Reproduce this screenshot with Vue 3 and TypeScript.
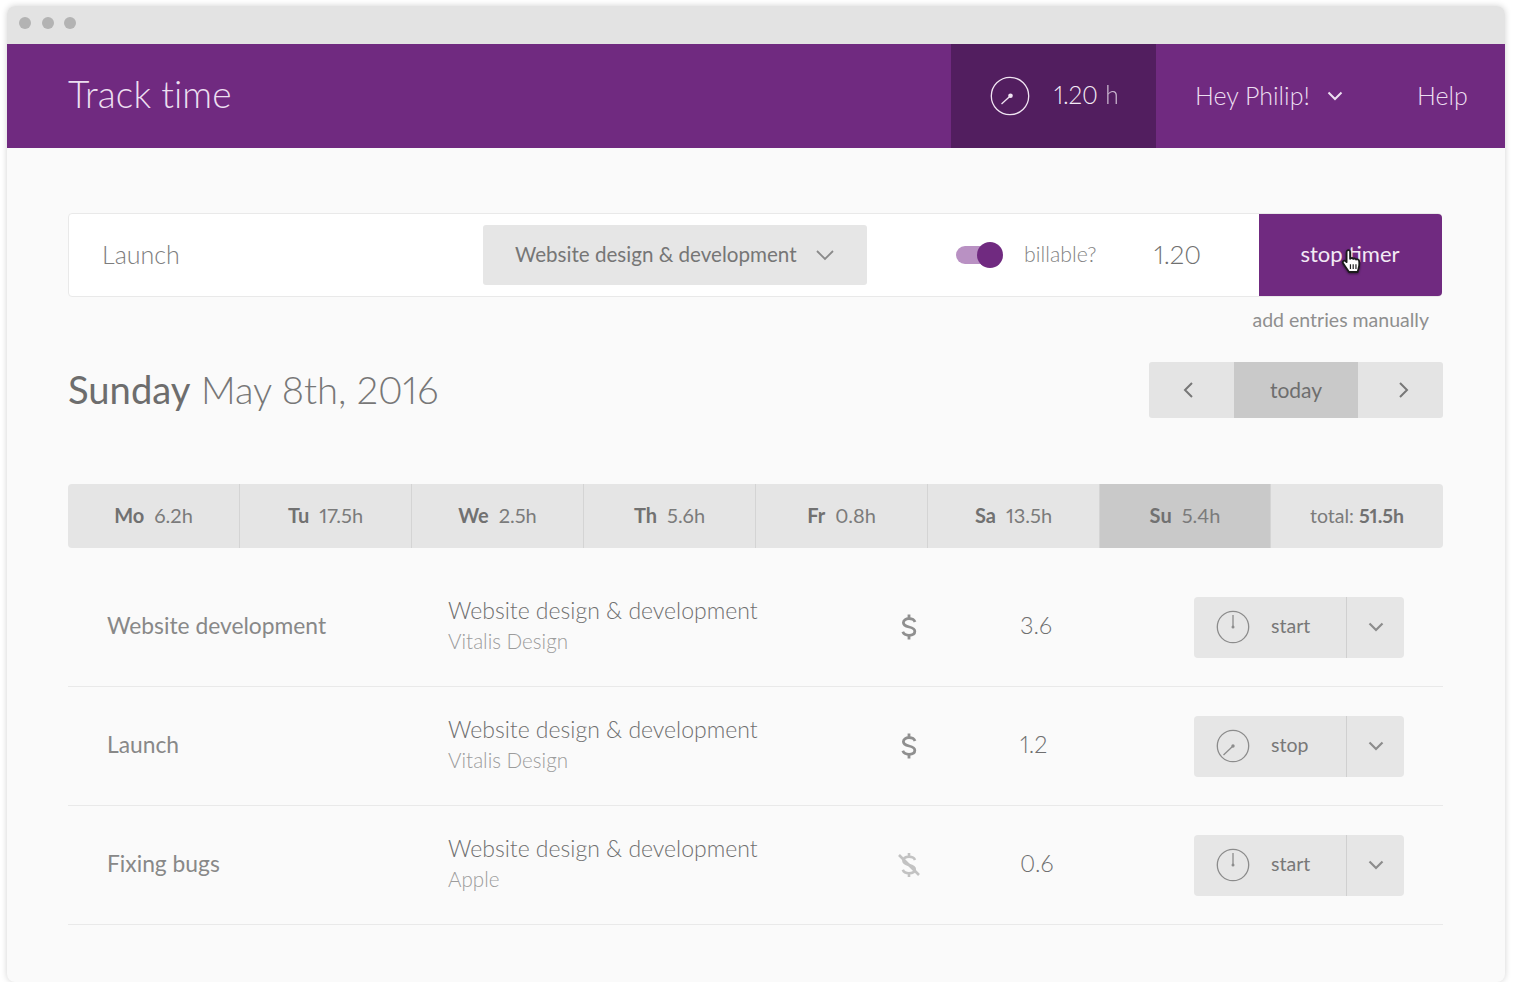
<script setup lang="ts">
const days = [
  { d: 'Mo', h: '6.2h' }, { d: 'Tu', h: '17.5h' }, { d: 'We', h: '2.5h' }, { d: 'Th', h: '5.6h' },
  { d: 'Fr', h: '0.8h' }, { d: 'Sa', h: '13.5h' }, { d: 'Su', h: '5.4h', active: true },
]
const rows = [
  { name: 'Website development', project: 'Website design & development', client: 'Vitalis Design', billable: true, hours: '3.6', action: 'start' },
  { name: 'Launch', project: 'Website design & development', client: 'Vitalis Design', billable: true, hours: '1.2', action: 'stop' },
  { name: 'Fixing bugs', project: 'Website design & development', client: 'Apple', billable: false, hours: '0.6', action: 'start' },
]
</script>

<template>
  <div class="window">
    <div class="chrome">
      <i class="dot"></i><i class="dot"></i><i class="dot"></i>
    </div>
    <header class="header">
      <h1 class="title">Track time</h1>
      <div class="timer">
        <svg class="gauge" width="40" height="40" viewBox="0 0 40 40" fill="none" stroke="#f0e4f2">
          <circle cx="20" cy="20" r="18.7" stroke-width="1.3" />
          <path d="M11.5 28 20 20.2" stroke-width="1.3" />
          <circle cx="20.500" cy="19.800" r="2.300" fill="#f0e4f2" stroke="none" />
        </svg>
        <span class="timer-val">1.20 <span class="timer-unit">h</span></span>
      </div>
      <div class="user">
        <span>Hey Philip!</span>
        <svg width="16" height="10" viewBox="0 0 16 10" fill="none" stroke="#ecdff0" stroke-width="2"><path d="M1.5 1.5 8 8l6.5-6.5" /></svg>
      </div>
      <div class="help">Help</div>
    </header>

    <main class="main">
      <div class="entry">
        <div class="entry-name">Launch</div>
        <div class="select">
          <span>Website design &amp; development</span>
          <svg width="20" height="12" viewBox="0 0 20 12" fill="none" stroke="#8a8a8a" stroke-width="1.8"><path d="M2 2l8 8 8-8" /></svg>
        </div>
        <div class="toggle"><i class="track"></i><i class="knob"></i></div>
        <span class="billable">billable?</span>
        <span class="entry-hours">1.20</span>
        <button class="stop-btn">
          stop timer
          <svg class="cursor" width="24" height="30" viewBox="0 0 20 25">
            <path d="M6 2.200c1-.9 2.400-.3 2.400 1V9l.4-.3c.9-.5 1.800-.3 2.300.4.8-.6 2-.4 2.400.5.9-.5 2.200 0 2.400 1.100.3 2.200.2 4.500-.5 6.500l-.7 2.800H7.500L3.800 14.500 2.500 12.600c-.8-1.300.7-2.700 2-1.700l1 .9V3.600c0-.6.100-1.100.500-1.400Z" fill="#fff" stroke="#1c1c1c" stroke-width="1.500" stroke-linejoin="round"/>
            <path d="M8.700 13.500v4M11 13.500v4M13.300 13.500v4" stroke="#222" stroke-width="1"/>
          </svg>
        </button>
      </div>
      <div class="manual">add entries manually</div>

      <div class="date-row">
        <h2 class="date"><span class="date-day">Sunday</span> May 8th, 2016</h2>
        <div class="pager">
          <button class="page-arrow prev">
            <svg width="12" height="18" viewBox="0 0 12 18" fill="none" stroke="#777" stroke-width="2"><path d="M10 2 3 9l7 7" /></svg>
          </button>
          <button class="page-today">today</button>
          <button class="page-arrow next">
            <svg width="12" height="18" viewBox="0 0 12 18" fill="none" stroke="#777" stroke-width="2"><path d="m2 2 7 7-7 7" /></svg>
          </button>
        </div>
      </div>

      <div class="week">
        <div v-for="day in days" :key="day.d" class="day" :class="{ active: day.active }">
          <b>{{ day.d }}</b><span>{{ day.h }}</span>
        </div>
        <div class="day total">total:&nbsp;<b>51.5h</b></div>
      </div>

      <div class="rows">
        <div v-for="row in rows" :key="row.name" class="row">
          <div class="row-name">{{ row.name }}</div>
          <div class="row-project">
            <div class="project">{{ row.project }}</div>
            <div class="client">{{ row.client }}</div>
          </div>
          <div class="row-bill">
            <svg v-if="row.billable" width="16" height="28" viewBox="0 0 16 28" fill="none" stroke="#8f8f8f" stroke-width="2.800">
              <path d="M14 9c-.8-2.300-3-3.300-6-3.300-3.400 0-5.600 1.600-5.600 4.100 0 5.800 11.400 2.600 11.400 8.500 0 2.600-2.400 4-5.800 4-3.200 0-5.300-1.200-6.200-3.500" />
              <path d="M8 1.500v4M8 22.500v4" />
            </svg>
            <svg v-else width="24" height="28" viewBox="0 0 24 28" fill="none" stroke="#c2c2c2" stroke-width="2.600">
              <path d="M18 9c-.8-2.300-3-3.300-6-3.300-3.400 0-5.600 1.600-5.600 4.100 0 5.800 11.400 2.600 11.400 8.500 0 2.600-2.400 4-5.800 4-3.200 0-5.300-1.200-6.200-3.500" />
              <path d="M12 2v4M12 22v4M2 4l20 20" />
            </svg>
          </div>
          <div class="row-hours">{{ row.hours }}</div>
          <div class="action">
            <div class="action-main">
              <svg width="34" height="34" viewBox="0 0 34 34" fill="none" stroke="#8c8c8c" stroke-width="1.300">
                <circle cx="17" cy="17" r="15.700" />
                <template v-if="row.action === 'start'">
                  <path d="M17 5v12" />
                  <circle cx="17" cy="17" r="1.500" fill="#8c8c8c" stroke="none" />
                </template>
                <template v-else>
                  <path d="M7.500 26 17 17" />
                  <circle cx="17" cy="17" r="1.700" fill="#8c8c8c" stroke="none" />
                </template>
              </svg>
              <span>{{ row.action }}</span>
            </div>
            <div class="action-more">
              <svg width="16" height="10" viewBox="0 0 16 10" fill="none" stroke="#8c8c8c" stroke-width="2.200"><path d="M1.500 1.500 8 8l6.500-6.500" /></svg>
            </div>
          </div>
        </div>
      </div>
    </main>
  </div>
</template>

<style>
html, body { margin: 0; background: #fff; }
</style>

<style scoped>
.window {
  box-sizing: border-box;
  width: 1498px;
  height: 976px;
  margin: 6px 0 0 7px;
  border-radius: 8px;
  overflow: hidden;
  background: #fafafa;
  box-shadow: 0 0 6px rgba(0, 0, 0, .18);
  font-family: Lato, "Open Sans", sans-serif;
  font-variant-numeric: proportional-nums;
  color: #7d7d7d;
}
.chrome {
  height: 38px;
  box-sizing: border-box;
  padding: 0 0 4px 12px;
  background: #e3e3e3;
  display: flex;
  align-items: center;
  gap: 10.500px;
}
.dot { width: 12px; height: 12px; border-radius: 50%; background: #b3b3b3; }
.header {
  height: 104px;
  background: #702a80;
  display: flex;
  align-items: center;
  color: #ecdff0;
}
.title {
  margin: -5px 0 0 61px;
  flex: 1;
  font-size: 37px;
  font-weight: 300;
  letter-spacing: .1px;
}
.timer {
  width: 205px;
  height: 100%;
  background: #521e5f;
  display: flex;
  align-items: center;
  padding-left: 39px;
  box-sizing: border-box;
}
.gauge { margin-right: 24px; flex: none; }
.timer-val { font-size: 24.500px; font-weight: 300; letter-spacing: -.2px; margin-top: -3px; color: #f4ecf6; }
.timer-unit { opacity: .75; font-weight: 300; margin-left: 1px; }
.user {
  display: flex;
  align-items: center;
  gap: 17px;
  padding-left: 39px;
  width: 222px;
  box-sizing: border-box;
  font-size: 25px;
  font-weight: 300;
}
.user span { white-space: nowrap; margin-top: -3px; }
.help { width: 127px; font-size: 25px; font-weight: 300; box-sizing: border-box; padding-left: 39px; margin-top: -3px; }
.main { padding: 65px 62px 0 61px; }
.entry {
  box-sizing: border-box;
  height: 84px;
  width: 1374px;
  background: #fff;
  border: 1px solid #e9e9e9;
  border-radius: 4px;
  display: flex;
  align-items: center;
  position: relative;
}
.entry-name { width: 414px; padding-left: 33px; box-sizing: border-box; font-size: 25px; color: #7d7d7d; font-weight: 300; margin-top: -2px; }
.select {
  width: 384px;
  height: 60px;
  box-sizing: border-box;
  background: #e6e6e6;
  border-radius: 3px;
  display: flex;
  align-items: center;
  justify-content: space-between;
  padding: 0 32px;
  font-size: 20.600px;
  color: #767676;
  white-space: nowrap;
}
.select span { margin-top: -2px; }
.toggle { position: relative; width: 47px; height: 26px; margin-left: 89px; flex: none; margin-top: -1px; }
.track { position: absolute; left: 0; top: 4px; width: 43px; height: 18px; border-radius: 9px; background: #b991c3; }
.knob { position: absolute; right: 0; top: 0; width: 26px; height: 26px; border-radius: 50%; background: #702a80; }
.billable { margin-left: 21px; font-size: 21.300px; color: #838383; font-weight: 300; width: 130px; flex: none; margin-top: -2px; }
.entry-hours { font-size: 26px; font-weight: 300; color: #707070; width: 105px; flex: none; margin-top: -2px; }
.stop-btn {
  position: absolute;
  right: -1px;
  top: 0;
  bottom: 0;
  width: 183px;
  border: 0;
  background: #702a80;
  color: #f3eaf5;
  font: 400 22px Lato, sans-serif;
  border-radius: 0 4px 4px 0;
  padding: 0 1px 3px 0;
}
.cursor { position: absolute; left: 81px; top: 34px; filter: drop-shadow(0 1px 1px rgba(0, 0, 0, .5)); }
.manual { font-size: 19.500px; font-weight: 400; text-align: right; padding: 9px 14px 0 0; color: #8f8f8f; height: 27px; line-height: 27px; }
.date-row { display: flex; justify-content: space-between; align-items: center; margin-top: 29px; height: 56px; }
.date { margin: -2px 0 0; font-size: 38.200px; font-weight: 300; color: #777; white-space: nowrap; }
.date-day { font-weight: 400; color: #6d6d6d; }
.pager { display: flex; height: 56px; width: 294px; border-radius: 3px; overflow: hidden; background: #e4e4e4; }
.page-arrow { flex: none; box-sizing: border-box; width: 85px; border: 0; background: none; padding: 0; display: flex; align-items: center; justify-content: center; }
.page-arrow.prev { padding-right: 8px; }
.page-arrow.next { padding-left: 6px; }
.page-today { flex: none; width: 124px; border: 0; background: #c9c9c9; color: #6e6e6e; font: 400 21px Lato, sans-serif; padding: 0 0 2px; }
.week {
  margin-top: 66px;
  height: 64px;
  width: 1375px;
  display: grid;
  grid-template-columns: repeat(6, 172px) 171px 172px;
  background: #e5e5e5;
  border-radius: 4px;
  overflow: hidden;
}
.day {
  display: flex;
  align-items: center;
  justify-content: center;
  gap: 10px;
  padding-bottom: 2px;
  font-size: 20px;
  font-weight: 400;
  color: #7b7b7b;
  border-right: 1px solid #d4d4d4;
  white-space: nowrap;
}
.day b { font-weight: 700; color: #717171; }
.day.active { background: #c9c9c9; }
.day.total { gap: 0; border-right: 0; font-size: 19.500px; }
.rows { margin-top: 20px; }
.row {
  box-sizing: border-box;
  height: 119px;
  width: 1375px;
  border-bottom: 1px solid #e9e9e9;
  display: grid;
  grid-template-columns: 341px 448px 124px 174px 210px;
  padding-left: 39px;
  align-items: center;
}
.row-name { font-size: 22.800px; font-weight: 400; color: #888; margin-top: -5px; }
.row-project { margin-top: -4px; }
.project { font-size: 23px; font-weight: 300; color: #6f6f6f; line-height: 30px; white-space: nowrap; }
.client { font-size: 20.600px; font-weight: 300; color: #9c9c9c; line-height: 30px; margin-top: 1px; }
.row-bill { display: flex; justify-content: center; width: 26px; }
.row-hours { font-size: 23.500px; font-weight: 300; color: #6f6f6f; margin-top: -5px; }
.action { display: flex; height: 61px; background: #e6e6e6; border-radius: 4px; }
.action-main {
  width: 153px;
  box-sizing: border-box;
  padding-left: 22px;
  display: flex;
  align-items: center;
  gap: 21px;
  border-right: 1px solid #d0d0d0;
  font-size: 19.500px;
  color: #787878;
}
.action-main span { margin-top: -3px; }
.action-more { flex: 1; display: flex; align-items: center; justify-content: center; }
</style>
